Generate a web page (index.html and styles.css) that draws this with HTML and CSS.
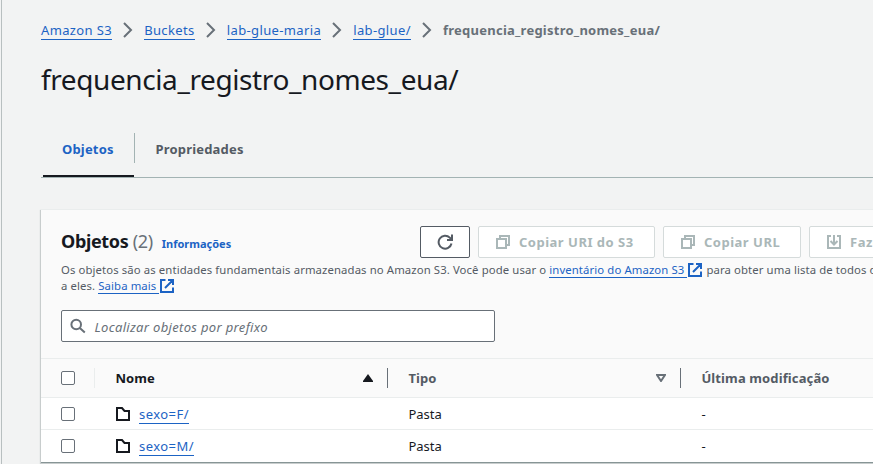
FILE: index.html
```html
<!DOCTYPE html>
<html lang="pt-BR">
<head>
<meta charset="utf-8">
<title>frequencia_registro_nomes_eua/</title>
<link rel="stylesheet" href="styles.css">
</head>
<body>
<svg class="defs" width="0" height="0">
  <symbol id="chevron" viewBox="0 0 10 16"><path d="M1 1l7 7-7 7" fill="none" stroke="currentColor" stroke-width="2"/></symbol>
  <symbol id="external" viewBox="0 0 16 16"><path d="M6.500 2H2v12h12V9.500M9 2h5v5M6 10l7.500-7.500" fill="none" stroke="currentColor" stroke-width="2"/></symbol>
  <symbol id="copy" viewBox="0 0 16 16"><path d="M2 5h9v9H2zM5 5V2h9v9h-3" fill="none" stroke="currentColor" stroke-width="2"/></symbol>
  <symbol id="folder" viewBox="0 0 16 16"><path d="M2 14V2h5l2.500 3H14v9z" fill="none" stroke="currentColor" stroke-width="2"/></symbol>
</svg>
<main class="page">
  <nav class="crumbs">
    <a class="link">Amazon S3</a><svg class="chev"><use href="#chevron"/></svg>
    <a class="link">Buckets</a><svg class="chev"><use href="#chevron"/></svg>
    <a class="link">lab-glue-maria</a><svg class="chev"><use href="#chevron"/></svg>
    <a class="link">lab-glue/</a><svg class="chev"><use href="#chevron"/></svg>
    <span class="current">frequencia_registro_nomes_eua/</span>
  </nav>
  <h1>frequencia_registro_nomes_eua/</h1>
  <div class="tabs">
    <div class="tab active"><span>Objetos</span></div>
    <div class="tab"><span>Propriedades</span></div>
  </div>
  <section class="card">
    <header class="card-head">
      <div class="title-row">
        <h2>Objetos <span class="count">(2)</span></h2>
        <a class="info">Informações</a>
        <div class="actions">
          <button class="btn refresh"><svg class="icon" viewBox="0 0 16 16"><path d="M14.500 9.500A6.500 6.500 0 1 1 12.800 3.600L14.500 5.500M15 0.500v5.500h-5" fill="none" stroke="currentColor" stroke-width="2"/></svg></button>
          <button class="btn off b1"><svg class="icon"><use href="#copy"/></svg><span>Copiar URI do S3</span></button>
          <button class="btn off b2"><svg class="icon"><use href="#copy"/></svg><span>Copiar URL</span></button>
          <button class="btn off b3"><svg class="icon" viewBox="0 0 16 16"><path d="M5 2H2v12h12V2h-3M8 1v9M4.500 7L8 10.500 11.500 7" fill="none" stroke="currentColor" stroke-width="2"/></svg><span>Fazer download</span></button>
        </div>
      </div>
      <p class="desc">Os objetos são as entidades fundamentais armazenadas no Amazon S3. Você pode usar o <a class="link">inventário do Amazon S3&nbsp;</a><svg class="ext"><use href="#external"/></svg> para obter uma lista de todos os<br>a eles. <a class="link">Saiba mais&nbsp;</a><svg class="ext"><use href="#external"/></svg></p>
      <div class="search"><svg class="glass" viewBox="0 0 16 16"><path d="M11 6.500a4.800 4.800 0 1 1-9.600 0a4.800 4.800 0 0 1 9.600 0zM9.800 10l5 4.500" fill="none" stroke="currentColor" stroke-width="2"/></svg><span>Localizar objetos por prefixo</span></div>
    </header>
    <div class="row head">
      <div class="check"><i class="box"></i></div>
      <div class="cell dark"><span>Nome</span><svg class="sort" viewBox="0 0 10 8"><path d="M5 0L10 7V8H0V7z" fill="currentColor"/></svg></div>
      <div class="cell"><span>Tipo</span><svg class="sort" viewBox="0 0 10 8"><path d="M1 1h8L5 7z" fill="none" stroke="currentColor" stroke-width="2"/></svg></div>
      <div class="cell last"><span>Última modificação</span></div>
    </div>
    <div class="row">
      <div class="check"><i class="box"></i></div>
      <div class="cell"><svg class="folder"><use href="#folder"/></svg><a class="link">sexo=F/</a></div>
      <div class="cell">Pasta</div>
      <div class="cell">-</div>
    </div>
    <div class="row">
      <div class="check"><i class="box"></i></div>
      <div class="cell"><svg class="folder"><use href="#folder"/></svg><a class="link">sexo=M/</a></div>
      <div class="cell">Pasta</div>
      <div class="cell">-</div>
    </div>
  </section>
</main>
</body>
</html>
```
FILE: styles.css
```css
* { box-sizing: border-box; }
body {
  margin: 0;
  height: 464px;
  overflow: hidden;
  background: #f2f3f3;
  color: #16191f;
  font: 13px/18px "Noto Sans", sans-serif;
}
svg { display: block; flex: none; }
.defs { position: absolute; }
.page {
  height: 464px;
  margin-left: 1px;
  border-left: 1px solid #b8bfc0;
  padding: 20px 0 0 39px;
  overflow: hidden;
}
.link { color: #1c63c4; border-bottom: 1px solid #1c63c4; white-space: nowrap; }
.crumbs { display: flex; align-items: center; height: 20px; white-space: nowrap; }
.crumbs .link { line-height: 18px; padding-top: 1px; letter-spacing: .36px; }
.chev { width: 10px; height: 16px; margin: 0 11px 0 11.2px; color: #687078; }
.current { font-weight: 700; color: #687078; letter-spacing: .24px; }
h1 { margin: 21px 0 0; font-size: 28px; line-height: 36px; font-weight: 400; letter-spacing: -.4px; }
.tabs {
  display: flex;
  width: 900px;
  height: 45px;
  margin-top: 36px;
  border-bottom: 1px solid #a3b3b3;
  font-weight: 700;
  letter-spacing: .18px;
  color: #545b64;
}
.tab { padding: 7px 21px 0; }
.tab.active {
  margin-left: 2px;
  width: 91px;
  padding: 7px 0 0 19px;
  color: #1c63c4;
  border-bottom: 2px solid #16191f;
}
.tab:last-child { height: 30px; border-left: 1px solid #a3b3b3; padding-left: 20.5px; }
.card {
  width: 1000px;
  height: 254px;
  margin-top: 31px;
  background: #fff;
  border-top: 1px solid #eaeded;
  border-bottom: 1px solid #879596;
  box-shadow: -1px 1px 1px #c8cdcd;
}
.card-head { height: 149px; padding: 16px 0 0 20px; background: #fafafa; border-bottom: 1px solid #eaeded; }
.title-row { display: flex; height: 32px; }
h2 { margin: 0; font-size: 18px; line-height: 30px; font-weight: 700; white-space: nowrap; letter-spacing: -.35px; }
.count { font-weight: 400; color: #687078; }
.info { margin: 9px 0 0 9px; font-size: 11px; font-weight: 700; color: #1c63c4; }
.actions { display: flex; gap: 8px; margin-left: auto; width: 621px; }
.btn {
  display: flex;
  flex: none;
  align-items: center;
  gap: 8px;
  height: 32px;
  padding: 0 0 0 16px;
  border: 1px solid #545b64;
  border-radius: 2px;
  background: #fff;
  color: #545b64;
  font: 700 13px/18px "Noto Sans", sans-serif;
  letter-spacing: .5px;
  white-space: nowrap;
}
.refresh { width: 50px; }
.off { border-color: #d5dbdb; color: #aab7b8; }
.b1 { width: 177px; }
.b2 { width: 138px; }
.b3 { width: 160px; }
.icon { width: 16px; height: 16px; }
.desc { margin: 4px 0 0; font-size: 11.34px; line-height: 16px; letter-spacing: .105px; color: #545b64; white-space: nowrap; }
.desc .link { display: inline-block; line-height: 15px; }
.ext { display: inline-block; width: 16px; height: 16px; vertical-align: -4px; color: #1c63c4; }
.search {
  display: flex;
  align-items: center;
  gap: 9px;
  width: 434px;
  height: 32px;
  margin-top: 16px;
  padding-left: 7.5px;
  border: 1px solid #687078;
  border-radius: 2px;
  background: #fff;
  color: #687078;
  font-style: italic;
  letter-spacing: .33px;
}
.search span { padding-top: 1px; }
.glass { width: 16px; height: 16px; }
.row { display: grid; grid-template-columns: 54px 293px 293px 1fr; height: 32px; border-bottom: 1px solid #eaeded; align-items: center; }
.row:last-child { border-bottom: 0; }
.head { height: 39px; background: #fafafa; font-weight: 700; color: #545b64; letter-spacing: .12px; }
.check { display: flex; align-items: center; height: 20px; padding-left: 20px; }
.head .check { border-right: 1px solid #eaeded; }
.box { width: 14px; height: 14px; border: 1px solid #687078; border-radius: 2px; background: #fff; }
.cell { display: flex; align-items: center; height: 20px; padding-left: 20.4px; }
.cell .link { line-height: 18px; margin-top: 1px; letter-spacing: .45px; }
.head .cell { border-right: 1px solid #687078; justify-content: space-between; padding-right: 14px; }
.head .last { border-right: 0; }
.dark { color: #16191f; }
.sort { width: 10px; height: 8px; }
.cell:not(.dark) .sort { color: #687078; }
.folder { width: 16px; height: 16px; margin: 0 8px 0 -.4px; }
```
